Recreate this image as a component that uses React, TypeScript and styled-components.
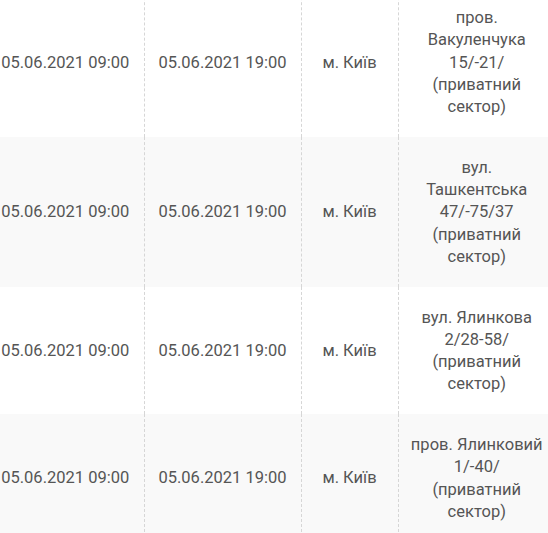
import React from 'react'
import styled, { createGlobalStyle } from 'styled-components'

const GlobalStyle = createGlobalStyle`
  html, body {
    margin: 0;
    padding: 0;
    background: #fff;
    overflow: hidden;
  }
`

const Viewport = styled.div`
  width: 548px;
  height: 533px;
  overflow: hidden;
  background: #fff;
`

const Table = styled.table`
  margin: -13px 0 0 -13px;
  border-collapse: collapse;
  table-layout: fixed;
  width: 568px;
  font-family: Roboto, "Liberation Sans", sans-serif;
  font-size: 16.5px;
  line-height: 22.3px;
  color: #555;
`

const Row = styled.tr<{ $shaded: boolean }>`
  background: ${(p) => (p.$shaded ? '#f9f9f9' : '#fff')};
`

const Cell = styled.td`
  padding: 20px 8px 18.3px;
  text-align: center;
  vertical-align: middle;
  border-left: 1px dashed #d6d6d6;
  white-space: nowrap;
  &:first-child {
    border-left: none;
  }
`

const Line = styled.span`
  display: block;
`

type Outage = {
  start: string
  end: string
  city: string
  address: string[]
}

const outages: Outage[] = [
  {
    start: '05.06.2021 09:00',
    end: '05.06.2021 19:00',
    city: 'м. Київ',
    address: ['пров.', 'Вакуленчука', '15/-21/', '(приватний', 'сектор)'],
  },
  {
    start: '05.06.2021 09:00',
    end: '05.06.2021 19:00',
    city: 'м. Київ',
    address: ['вул.', 'Ташкентська', '47/-75/37', '(приватний', 'сектор)'],
  },
  {
    start: '05.06.2021 09:00',
    end: '05.06.2021 19:00',
    city: 'м. Київ',
    address: ['вул. Ялинкова', '2/28-58/', '(приватний', 'сектор)'],
  },
  {
    start: '05.06.2021 09:00',
    end: '05.06.2021 19:00',
    city: 'м. Київ',
    address: ['пров. Ялинковий', '1/-40/', '(приватний', 'сектор)'],
  },
]

export default function App(): React.ReactElement {
  return (
    <>
      <GlobalStyle />
      <Viewport>
        <Table>
          <colgroup>
            <col style={{ width: 157 }} />
            <col style={{ width: 157 }} />
            <col style={{ width: 97 }} />
            <col style={{ width: 157 }} />
          </colgroup>
          <tbody>
            {outages.map((o, i) => (
              <Row key={i} $shaded={i % 2 === 1}>
                <Cell>{o.start}</Cell>
                <Cell>{o.end}</Cell>
                <Cell>{o.city}</Cell>
                <Cell>
                  {o.address.map((line) => (
                    <Line key={line}>{line}</Line>
                  ))}
                </Cell>
              </Row>
            ))}
          </tbody>
        </Table>
      </Viewport>
    </>
  )
}
